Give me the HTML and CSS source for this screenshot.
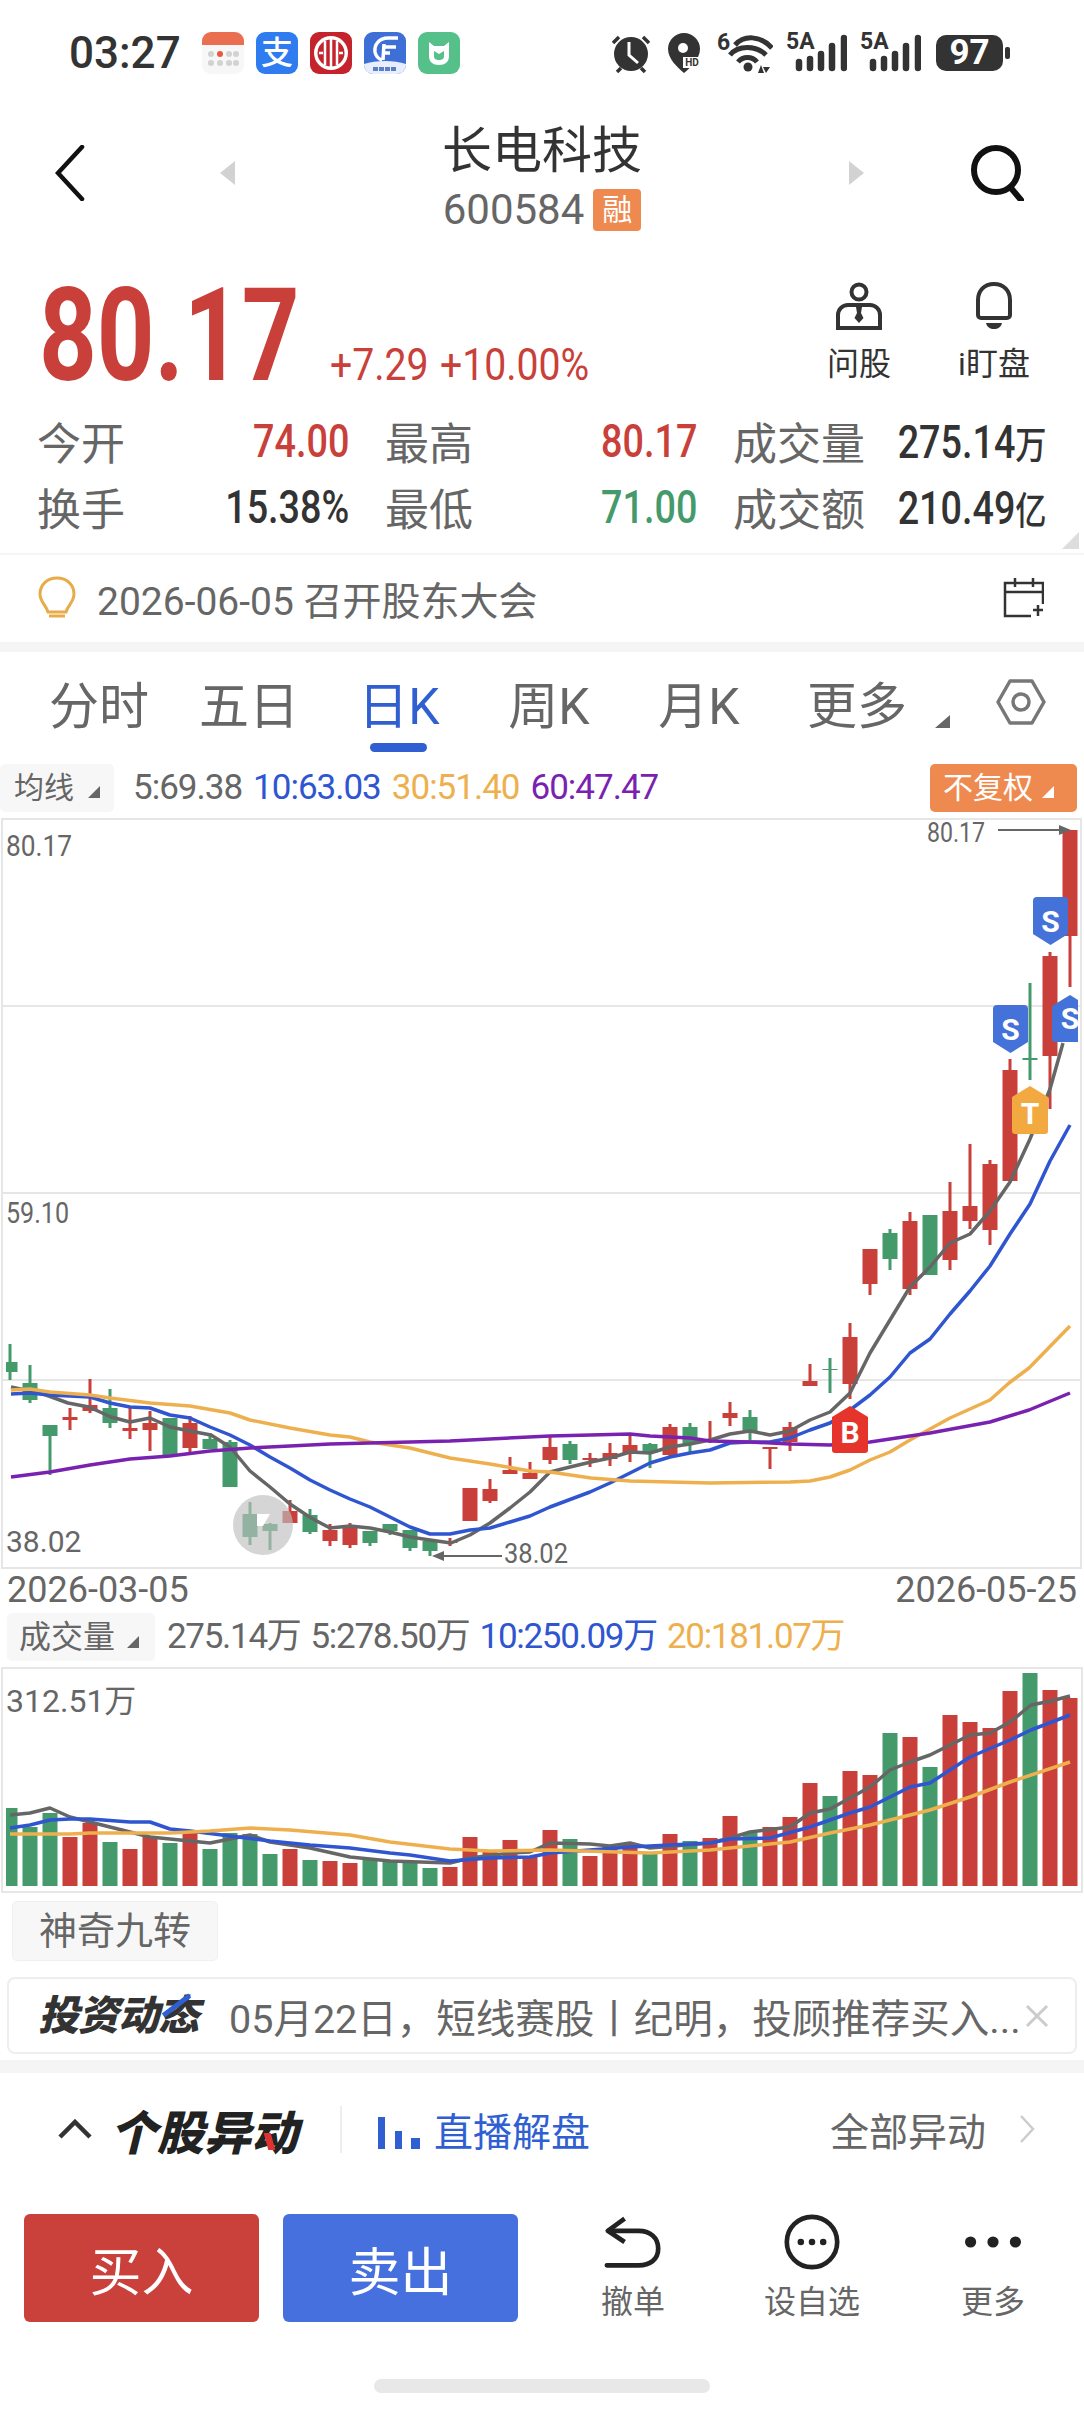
FILE: index.html
```html
<!DOCTYPE html>
<html lang="zh-CN">
<head>
    <meta charset="UTF-8">
    <meta name="viewport" content="width=device-width, initial-scale=1.0">
    <title>长电科技 600584</title>
    <link rel="stylesheet" href="styles.css">
</head>
<body>
    <div class="status-bar">
        <span class="clock">03:27</span>
        <div class="app-icons">
            <svg class="app" viewBox="0 0 42 42"><rect width="42" height="42" rx="9" fill="#f7f7f7"/><path d="M0 13V9a9 9 0 0 1 9-9h24a9 9 0 0 1 9 9v4z" fill="#e96f50"/><g fill="#d2d2d2"><circle cx="9" cy="22" r="3"/><circle cx="27" cy="22" r="3"/><circle cx="34" cy="22" r="3"/><circle cx="9" cy="31" r="3"/><circle cx="18" cy="31" r="3"/><circle cx="27" cy="31" r="3"/><circle cx="34" cy="31" r="3"/></g><circle cx="18" cy="22" r="3" fill="#e9573f"/></svg>
            <span class="app app-alipay">支</span>
            <svg class="app" viewBox="0 0 42 42"><rect width="42" height="42" rx="9" fill="#c4232b"/><circle cx="21" cy="21" r="17" fill="#fff"/><circle cx="21" cy="21" r="13.500" fill="#c4232b"/><path d="M21 7v28M15 9v24M27 9v24M9 21h4M29 21h4" stroke="#fff" stroke-width="2.500" fill="none"/></svg>
            <svg class="app" viewBox="0 0 42 42"><rect width="42" height="42" rx="9" fill="#3d6fd6"/><path d="M0 32c12-4 30-4 42 0v1a9 9 0 0 1-9 9H9a9 9 0 0 1-9-9z" fill="#e8eefb"/><path d="M34 6H24C15 6 10 13 11 20c1 5 4 7 7 8M20 15h12M18 21h8M20 12l-1 16" fill="none" stroke="#fff" stroke-width="3.500"/><path d="M9 37h24" stroke="#5a7fc8" stroke-width="4" stroke-dasharray="5 1"/></svg>
            <svg class="app" viewBox="0 0 42 42"><rect width="42" height="42" rx="9" fill="#55c08a"/><path d="M11 10l5 4h10l5-4v14c0 6-4 9-10 9s-10-3-10-9z" fill="#fff"/><path d="M16 19v5c0 3 2 4 5 4s5-1 5-4v-5l-5 3z" fill="#55c08a"/></svg>
        </div>
        <div class="sys-icons">
            <svg class="ico-alarm" viewBox="0 0 38 40"><path d="M1 10l6-6M37 10l-6-6M5 39l4-4M33 39l-4-4" stroke="#333" stroke-width="3.500"/><circle cx="19" cy="21" r="17" fill="#333"/><path d="M17 9v13l9 8" stroke="#fff" stroke-width="3" fill="none"/></svg>
            <div class="ico-pin">
                <svg viewBox="0 0 32 40"><path d="M16 0a16 16 0 0 1 16 16c0 10-10 19-16 24C10 35 0 26 0 16A16 16 0 0 1 16 0z" fill="#333"/><circle cx="15" cy="15" r="5" fill="#fff"/></svg>
                <span class="pin-hd">HD</span>
            </div>
            <div class="ico-wifi">
                <svg viewBox="0 0 55 40"><path d="M17 12C26 2 42 2 54 15M12 22C20 12 38 12 48 22M20 29c5-6 14-6 19 0" fill="none" stroke="#333" stroke-width="5"/><circle cx="30" cy="34" r="4.500" fill="#333"/><path d="M43 32l3 8h-6zM48 40l-3-6h7z" fill="#333"/></svg>
                <span class="wifi-num">6</span>
            </div>
            <div class="ico-signal">
                <span class="sig-text">5A</span>
                <svg viewBox="0 0 61 38"><path d="M13 28v6M24 25v9M35 20v14M46 12v22M58 4v30" fill="none" stroke="#333" stroke-width="6.500" stroke-linecap="round"/></svg>
            </div>
            <div class="ico-signal">
                <span class="sig-text">5A</span>
                <svg viewBox="0 0 61 38"><path d="M13 28v6M24 25v9M35 20v14M46 12v22M58 4v30" fill="none" stroke="#333" stroke-width="6.500" stroke-linecap="round"/></svg>
            </div>
            <div class="battery"><span class="battery-body">97</span><span class="battery-nub"></span></div>
        </div>
    </div>

    <div class="nav">
        <div class="nav-left">
            <svg class="ico-back" viewBox="0 0 30 56"><path d="M27 2L3 28l24 26" fill="none" stroke="#111" stroke-width="4.500" stroke-linecap="round"/></svg>
        </div>
        <div class="nav-center">
            <span class="tri-left"></span>
            <div class="nav-title">
                <div class="stock-name">长电科技</div>
                <div class="stock-code">600584<span class="tag-rong">融</span></div>
            </div>
            <span class="tri-right"></span>
        </div>
        <div class="nav-right">
            <svg class="ico-search" viewBox="0 0 54 56"><circle cx="26" cy="25" r="22" fill="none" stroke="#111" stroke-width="6"/><path d="M41 43l10 12" stroke="#111" stroke-width="6" stroke-linecap="round"/></svg>
        </div>
    </div>

    <div class="quote">
        <div class="quote-price">
            <span class="price-box"><span class="price">80.17</span></span>
            <span class="change-box"><span class="change">+7.29</span></span>
            <span class="change-box"><span class="change">+10.00%</span></span>
        </div>
        <div class="quote-tools">
            <div class="quote-tool">
                <svg class="ico-ask" viewBox="0 0 46 48"><circle cx="23" cy="10" r="7.500" fill="none" stroke="#333" stroke-width="4"/><path d="M16 23h-4A10 10 0 0 0 2 33v13h42V33a10 10 0 0 0-10-10h-4" fill="none" stroke="#333" stroke-width="4"/><path d="M15 23h16" stroke="#333" stroke-width="4"/><path d="M20 25h6l-1 6 2.500 5-4.500 5-4.500-5 2.500-5z" fill="#333"/></svg>
                <span>问股</span>
            </div>
            <div class="quote-tool">
                <svg class="ico-bell" viewBox="0 0 38 48"><path d="M19 2C9 2 3 9 3 18v15a3 3 0 0 0 3 3h26a3 3 0 0 0 3-3V18C35 9 29 2 19 2z" fill="none" stroke="#333" stroke-width="4"/><path d="M11 41h16c-1 4-4 6-8 6s-7-2-8-6z" fill="#333"/></svg>
                <span>i盯盘</span>
            </div>
        </div>
    </div>

    <div class="stats">
        <div class="stat"><span>今开</span><b class="red">74.00</b></div>
        <div class="stat"><span>最高</span><b class="red">80.17</b></div>
        <div class="stat"><span>成交量</span><b>275.14<small>万</small></b></div>
        <div class="stat"><span>换手</span><b>15.38%</b></div>
        <div class="stat"><span>最低</span><b class="green">71.00</b></div>
        <div class="stat"><span>成交额</span><b>210.49<small>亿</small></b></div>
        <span class="corner"></span>
    </div>

    <div class="notice">
        <svg class="ico-bulb" viewBox="0 0 38 44"><path d="M19 2C9 2 2 9 2 18c0 8 6 11 8 18h18c2-7 8-10 8-18 0-9-7-16-17-16z" fill="none" stroke="#e7ab48" stroke-width="3"/><path d="M11 40h16" stroke="#e7ab48" stroke-width="3"/></svg>
        <span class="notice-text">2026-06-05 召开股东大会</span>
        <svg class="ico-cal" viewBox="0 0 41 41"><path d="M40 27V6H2v33h26M2 15h38M12 1v9M30 1v9M30 33h10M35 28v11" fill="none" stroke="#333" stroke-width="2.500"/></svg>
    </div>

    <div class="band"></div>

    <div class="tabs">
        <div class="tab-list">
            <span class="tab">分时</span>
            <span class="tab">五日</span>
            <span class="tab active">日K</span>
            <span class="tab">周K</span>
            <span class="tab">月K</span>
            <span class="tab tab-more">更多<i class="tri-corner"></i></span>
        </div>
        <svg class="ico-hex" viewBox="0 0 50 46"><path d="M14 2h22l12 21-12 21H14L2 23z" fill="none" stroke="#777" stroke-width="3.500" stroke-linejoin="round"/><circle cx="25" cy="23" r="8" fill="none" stroke="#777" stroke-width="3.500"/></svg>
    </div>

    <div class="ma-row">
        <span class="chip">均线<i class="tri-corner"></i></span>
        <div class="ma-values">
            <span class="gray">5:69.38</span>
            <span class="blue">10:63.03</span>
            <span class="orange">30:51.40</span>
            <span class="purple">60:47.47</span>
        </div>
        <span class="chip chip-orange">不复权<i class="tri-corner"></i></span>
    </div>

    <svg class="kline" viewBox="0 814 1084 756">
        <defs><clipPath id="clip-right"><rect x="0" y="814" width="1078" height="756"/></clipPath></defs>
        <rect class="frame" x="2" y="819" width="1079" height="749"/>
        <path class="frame" d="M2 1006H1081M2 1193H1081M2 1380H1081"/>
        <text class="axis" x="6" y="856" textLength="66" lengthAdjust="spacingAndGlyphs">80.17</text>
        <text class="axis" x="6" y="1223" textLength="63" lengthAdjust="spacingAndGlyphs">59.10</text>
        <text class="axis" x="6" y="1552">38.02</text>
        <g id="candles"></g>
        <g id="price-lines"></g>
        <text class="axis axis-small" x="927" y="842" textLength="58" lengthAdjust="spacingAndGlyphs">80.17</text>
        <path class="pointer" d="M998 830H1062"/>
        <path class="pointer-head" d="M1071 830l-12-5v10z"/>
        <path class="pointer" d="M442 1556H502"/>
        <path class="pointer-head" d="M432 1556l12-5v10z"/>
        <text class="axis axis-small" x="504" y="1563" textLength="64" lengthAdjust="spacingAndGlyphs">38.02</text>
        <circle class="watermark" cx="263" cy="1525" r="30"/>
        <path d="M257 1514h13l-7 12h-6z" fill="#fff"/>
        <g class="badge-blue"><path d="M993 1009a4 4 0 0 1 4-4h27a4 4 0 0 1 4 4v33l-17.500 11-17.500-11z"/><text x="1010.500" y="1040">S</text></g>
        <g class="badge-blue"><path d="M1033 901a4 4 0 0 1 4-4h27a4 4 0 0 1 4 4v33l-17.500 11-17.500-11z"/><text x="1050.500" y="932">S</text></g>
        <g class="badge-blue" clip-path="url(#clip-right)"><path d="M1052 1006l18-11 18 11v33a3 3 0 0 1-3 3h-30a3 3 0 0 1-3-3z"/><text x="1070" y="1029">S</text></g>
        <g class="badge-orange"><path d="M1012 1097l18-11 18 11v34a3 3 0 0 1-3 3h-30a3 3 0 0 1-3-3z"/><text x="1030" y="1124">T</text></g>
        <g class="badge-red"><path d="M832 1417l18-11 18 11v33a3 3 0 0 1-3 3h-30a3 3 0 0 1-3-3z"/><text x="850" y="1443">B</text></g>
    </svg>

    <div class="dates"><span>2026-03-05</span><span>2026-05-25</span></div>

    <div class="vol-row">
        <span class="chip chip-vol">成交量<i class="tri-corner"></i></span>
        <div class="ma-values">
            <span class="gray">275.14万</span>
            <span class="gray">5:278.50万</span>
            <span class="blue">10:250.09万</span>
            <span class="orange">20:181.07万</span>
        </div>
    </div>

    <svg class="volume" viewBox="0 1666 1084 228">
        <rect class="frame" x="2" y="1668" width="1080" height="224"/>
        <g id="vol-bars"></g>
        <g id="vol-lines"></g>
        <text class="axis axis-vol" x="6" y="1712">312.51万</text>
    </svg>

    <div class="chip-row"><span class="chip chip-magic">神奇九转</span></div>

    <div class="news">
        <span class="news-logo">投资动态</span>
        <span class="news-text">05月22日，短线赛股丨纪明，投顾推荐买入...</span>
        <svg class="ico-x" viewBox="0 0 24 24"><path d="M2 2l20 20M22 2L2 22" stroke="#ccc" stroke-width="3"/></svg>
    </div>

    <div class="band band-lower"></div>

    <div class="moves">
        <svg class="ico-up" viewBox="0 0 34 20"><path d="M2 18L17 3l15 15" fill="none" stroke="#333" stroke-width="4.500"/></svg>
        <span class="moves-title">个股异动</span>
        <span class="moves-sep"></span>
        <svg class="ico-bars" viewBox="0 0 42 32"><path d="M0 0h7v32H0zM17 14h7v18h-7zM33 21h9v11h-9z" fill="#2f5fd0"/></svg>
        <span class="moves-live">直播解盘</span>
        <span class="moves-all">全部异动</span>
        <svg class="ico-next" viewBox="0 0 16 28"><path d="M2 1l12 13L2 27" fill="none" stroke="#ccc" stroke-width="2.500"/></svg>
    </div>

    <div class="trade">
        <button class="btn btn-buy">买入</button>
        <button class="btn btn-sell">卖出</button>
        <div class="tool tool-undo">
            <svg class="tool-ico" viewBox="0 0 60 60"><g transform="translate(0 3)"><path d="M21 2L3 15l18 12" fill="none" stroke="#222" stroke-width="5" stroke-linejoin="round"/><path d="M4 15h32c12 0 21 7 21 19s-9 18-21 18H2" fill="none" stroke="#222" stroke-width="5" stroke-linecap="round"/></g></svg>
            <span>撤单</span>
        </div>
        <div class="tool tool-watch">
            <svg class="tool-ico" viewBox="0 0 60 60"><circle cx="30" cy="30" r="27" fill="none" stroke="#222" stroke-width="5"/><circle cx="18" cy="30" r="3.500" fill="#222"/><circle cx="30" cy="30" r="3.500" fill="#222"/><circle cx="42" cy="30" r="3.500" fill="#222"/></svg>
            <span>设自选</span>
        </div>
        <div class="tool tool-more">
            <svg class="tool-ico" viewBox="0 0 60 60"><circle cx="6" cy="30" r="6" fill="#222"/><circle cx="30" cy="30" r="6" fill="#222"/><circle cx="54" cy="30" r="6" fill="#222"/></svg>
            <span>更多</span>
        </div>
    </div>

    <div class="home-bar"></div>

    <script src="chart.js"></script>
</body>
</html>
```
FILE: styles.css
```css
* {
    box-sizing: border-box;
}
body {
    width: 1084px;
    height: 2412px;
    margin: 0;
    overflow: hidden;
    background: #fff;
    font-family: Roboto, "Noto Sans CJK SC", sans-serif;
    color: #333;
}
.red { color: #c9403a; }
.green { color: #459a6c; }
.gray { color: #666; }
.blue { color: #2f55d0; }
.orange { color: #eeb04e; }
.purple { color: #7a22b0; }

/* status bar */
.status-bar {
    height: 106px;
    display: flex;
    align-items: center;
    padding-left: 69px;
}
.clock {
    width: 133px;
    font-size: 44px;
    font-weight: 500;
}
.app-icons {
    display: flex;
    gap: 12px;
}
.app {
    display: block;
    width: 42px;
    height: 42px;
}
.app-alipay {
    border-radius: 9px;
    background: #2f7cf0;
    color: #fff;
    font-size: 32px;
    font-weight: 500;
    line-height: 42px;
    text-align: center;
}
.sys-icons {
    display: flex;
    align-items: center;
    margin-left: 152px;
}
.sys-icons svg {
    display: block;
}
.ico-alarm { width: 38px; height: 40px; }
.ico-pin {
    position: relative;
    width: 32px;
    height: 40px;
    margin-left: 18px;
}
.pin-hd {
    position: absolute;
    left: 15px;
    top: 24px;
    width: 18px;
    height: 11px;
    background: #fff;
    font-size: 10px;
    font-weight: 700;
    line-height: 11px;
    text-align: center;
}
.ico-wifi {
    position: relative;
    width: 55px;
    height: 40px;
    margin-left: 18px;
}
.wifi-num {
    position: absolute;
    left: -1px;
    top: -2px;
    font-size: 23px;
    font-weight: 700;
    line-height: 24px;
}
.ico-signal {
    position: relative;
    width: 61px;
    height: 38px;
    margin-left: 13px;
}
.sig-text {
    position: absolute;
    left: 0;
    top: -4px;
    font-size: 23px;
    font-weight: 700;
    line-height: 24px;
}
.battery {
    display: flex;
    align-items: center;
    margin-left: 15px;
}
.battery-body {
    width: 67px;
    height: 36px;
    border-radius: 10px;
    background: #333;
    color: #fff;
    font-size: 35px;
    font-weight: 700;
    line-height: 36px;
    text-align: center;
}
.battery-nub {
    width: 5px;
    height: 12px;
    margin-left: 2px;
    border-radius: 2px;
    background: #333;
}

/* stock header */
.nav {
    height: 134px;
    display: grid;
    grid-template-columns: 220px 1fr 220px;
    align-items: center;
}
.nav-left { padding-left: 55px; }
.nav-right { padding-right: 60px; text-align: right; }
.ico-back { display: block; width: 30px; height: 56px; }
.ico-search { display: inline-block; width: 54px; height: 56px; vertical-align: top; }
.nav-center {
    display: flex;
    align-items: center;
    justify-content: space-between;
    height: 134px;
}
.tri-left, .tri-right {
    width: 0;
    height: 0;
    border-top: 12px solid transparent;
    border-bottom: 12px solid transparent;
}
.tri-left { border-right: 15px solid #d2d2d2; }
.tri-right { border-left: 15px solid #d2d2d2; }
.nav-title {
    align-self: flex-start;
    text-align: center;
}
.stock-name {
    margin-top: 10px;
    font-size: 50px;
    line-height: 70px;
}
.stock-code {
    display: flex;
    align-items: center;
    justify-content: center;
    margin-top: 2px;
    color: #666;
    font-size: 42px;
    line-height: 44px;
}
.tag-rong {
    width: 48px;
    height: 42px;
    margin-left: 9px;
    border-radius: 4px;
    background: #ee8a4f;
    color: #fff;
    font-size: 30px;
    line-height: 42px;
    text-align: center;
}

/* price block, the figures in the app are narrower than Roboto */
.quote {
    height: 160px;
    display: flex;
    align-items: flex-end;
    padding: 0 50px 4px 39px;
    color: #c9403a;
}
.quote-price {
    display: flex;
    align-items: baseline;
}
.price-box { width: 291px; }
.price {
    display: inline-block;
    font-size: 130px;
    font-weight: 700;
    line-height: 120px;
    transform: scaleX(0.775);
    transform-origin: left center;
}
.change-box { width: 110px; }
.change {
    display: inline-block;
    font-size: 45px;
    transform: scaleX(0.87);
    transform-origin: left center;
    white-space: nowrap;
}
.quote-tools {
    display: flex;
    gap: 55px;
    align-self: flex-start;
    margin: 42px 0 0 auto;
    color: #333;
}
.quote-tool {
    display: flex;
    flex-direction: column;
    align-items: center;
    width: 80px;
    font-size: 32px;
    line-height: 40px;
}
.ico-ask, .ico-bell { height: 48px; margin-bottom: 14px; }
.ico-ask { width: 46px; }
.ico-bell { width: 38px; }

/* stats */
.stats {
    position: relative;
    height: 155px;
    display: grid;
    grid-template-columns: repeat(3, 312px);
    grid-auto-rows: 66px;
    column-gap: 36px;
    padding: 8px 0 0 37px;
    border-bottom: 2px solid #f5f5f5;
}
.stat {
    display: flex;
    align-items: center;
    justify-content: space-between;
    color: #666;
    font-size: 44px;
    white-space: nowrap;
}
.stat b {
    display: inline-block;
    color: #333;
    font-size: 46px;
    font-weight: 500;
    transform: scaleX(0.82);
    transform-origin: right center;
}
.stat b.red { color: #c9403a; }
.stat b.green { color: #459a6c; }
.stat small { font-size: 38px; }
.corner {
    position: absolute;
    right: 5px;
    bottom: 4px;
    width: 0;
    height: 0;
    border-left: 17px solid transparent;
    border-bottom: 17px solid #ddd;
}

/* notice */
.notice {
    height: 87px;
    display: flex;
    align-items: center;
    padding: 0 40px 2px 38px;
}
.ico-bulb { width: 38px; height: 44px; }
.notice-text {
    margin-left: 21px;
    color: #666;
    font-size: 39px;
}
.ico-cal { width: 41px; height: 41px; margin-left: auto; }

.band {
    height: 10px;
    background: #f5f5f5;
}

/* period tabs */
.tabs {
    height: 108px;
    display: flex;
    align-items: center;
    padding: 0 38px 8px 24px;
}
.tab-list {
    display: grid;
    grid-template-columns: repeat(6, 150px);
}
.tab {
    position: relative;
    color: #666;
    font-size: 50px;
    text-align: center;
}
.tab.active { color: #2f5fd0; }
.tab.active::after {
    content: "";
    position: absolute;
    left: 46px;
    bottom: -14px;
    width: 57px;
    height: 9px;
    border-radius: 5px;
    background: #2f5fd0;
}
.tab-more { left: 8px; }
.tri-corner {
    display: inline-block;
    width: 0;
    height: 0;
    margin-left: 14px;
    border-left: 13px solid transparent;
    border-bottom: 13px solid #666;
}
.tab-more .tri-corner {
    position: absolute;
    left: 139px;
    bottom: 10px;
    border-left-width: 15px;
    border-bottom-width: 13px;
}
.ico-hex { width: 50px; height: 46px; margin-left: auto; }

/* indicator rows */
.ma-row {
    height: 54px;
    display: flex;
    align-items: flex-start;
    padding-top: 4px;
}
.chip {
    height: 48px;
    padding: 0 14px;
    border-radius: 5px;
    background: #f7f7f7;
    color: #666;
    font-size: 30px;
    line-height: 48px;
    white-space: nowrap;
}
.chip .tri-corner {
    border-left-width: 12px;
    border-bottom-width: 12px;
}
.ma-values {
    display: flex;
    gap: 11px;
    margin-left: 19px;
    font-size: 35px;
    letter-spacing: -1px;
    line-height: 48px;
    white-space: nowrap;
}
.chip-orange {
    width: 147px;
    margin-left: auto;
    margin-right: 7px;
    padding: 0 0 0 13px;
    background: #ee8a4f;
    color: #fff;
}
.chip-orange .tri-corner { border-bottom-color: #fff; margin-left: 9px; }

/* charts */
.kline, .volume {
    display: block;
    width: 1084px;
}
.kline { height: 756px; }
.volume { height: 228px; margin-top: 5px; }
.frame {
    fill: none;
    stroke: #e6e6e6;
    stroke-width: 2;
}
.axis {
    fill: #666;
    font-size: 30px;
}
.axis-small { font-size: 27px; }
.axis-vol { font-size: 32px; }
.pointer {
    stroke: #666;
    stroke-width: 2;
}
.pointer-head { fill: #666; }
.watermark { fill: rgba(190, 190, 190, 0.65); }
.badge-blue path { fill: #4472d9; }
.badge-orange path { fill: #f2a93f; }
.badge-red path { fill: #e5342b; }
.kline g text {
    fill: #fff;
    font-size: 30px;
    font-weight: 700;
    text-anchor: middle;
}
.dates {
    height: 43px;
    display: flex;
    justify-content: space-between;
    padding: 0 7px;
    color: #666;
    font-size: 36px;
    line-height: 40px;
}
.vol-row {
    display: flex;
    height: 48px;
    padding-left: 7px;
}
.chip-vol { width: 148px; padding: 0 0 0 12px; font-size: 32px; }
.chip-vol .tri-corner { margin-left: 12px; }
.vol-row .ma-values { margin-left: 12px; gap: 10px; letter-spacing: -1.3px; }
.chip-row {
    height: 76px;
    padding: 7px 0 0 12px;
}
.chip-magic {
    display: inline-block;
    width: 206px;
    height: 60px;
    padding: 0;
    border: 1px solid #f0f0f0;
    font-size: 38px;
    line-height: 58px;
    text-align: center;
}

/* news strip */
.news {
    height: 77px;
    display: flex;
    align-items: center;
    margin: 7px 7px 0;
    padding: 0 26px 0 29px;
    border: 2px solid #eee;
    border-radius: 8px;
}
.news-logo {
    position: relative;
    width: 191px;
    flex: none;
    font-size: 41px;
    font-weight: 900;
    font-style: italic;
    letter-spacing: -1px;
    line-height: 50px;
}
.news-logo::after {
    content: "";
    position: absolute;
    left: 122px;
    top: 12px;
    width: 33px;
    height: 5px;
    background: #2f5fd0;
    transform: rotate(-37deg);
}
.news-text {
    color: #666;
    font-size: 39.500px;
    white-space: nowrap;
}
.ico-x { width: 24px; height: 24px; margin-left: auto; flex: none; }
.band-lower {
    height: 13px;
    margin-top: 6px;
}

/* unusual moves row */
.moves {
    height: 141px;
    display: flex;
    align-items: center;
    padding: 0 49px 29px 58px;
}
.ico-up { width: 34px; height: 20px; }
.moves-title {
    position: relative;
    width: 190px;
    margin-left: 18px;
    font-size: 47px;
    font-weight: 900;
    font-style: italic;
    color: #222;
    white-space: nowrap;
}
.moves-title::after {
    content: "";
    position: absolute;
    right: 27px;
    bottom: 14px;
    width: 7px;
    height: 17px;
    background: #d33;
    transform: skewX(15deg);
}
.moves-sep {
    width: 2px;
    height: 47px;
    margin-left: 40px;
    background: #eee;
}
.ico-bars { width: 42px; height: 32px; margin-left: 36px; margin-top: 8px; }
.moves-live {
    margin-left: 14px;
    color: #2f5fd0;
    font-size: 39px;
}
.moves-all {
    margin-left: auto;
    color: #666;
    font-size: 39px;
}
.ico-next { width: 16px; height: 28px; margin-left: 33px; }

/* trade bar */
.trade {
    height: 108px;
    display: flex;
    padding-left: 24px;
}
.btn {
    width: 235px;
    height: 108px;
    border: none;
    border-radius: 6px;
    color: #fff;
    font-family: inherit;
    font-size: 52px;
}
.btn-buy { background: #ca403b; }
.btn-sell { background: #4570dd; margin-left: 24px; }
.tool {
    display: flex;
    flex-direction: column;
    align-items: center;
    width: 100px;
    color: #666;
    font-size: 32px;
    line-height: 40px;
}
.tool-ico { height: 60px; width: 60px; margin-bottom: 12px; }
.tool-undo { margin-left: 65px; }
.tool-watch { margin-left: 79px; }
.tool-more { margin-left: 81px; }
.home-bar {
    width: 336px;
    height: 14px;
    margin: 57px auto 0;
    border-radius: 7px;
    background: #e8e8e8;
}
```
FILE: chart.js
```javascript
// Page y coordinates are used directly, the svg viewBoxes start at the page offset
const UP = '#c9403a';
const DOWN = '#459a6c';

// [wickTop, wickBottom, bodyTop, bodyBottom, up?]
const candles = [
    [1344, 1380, 1362, 1372, 0], [1365, 1403, 1383, 1400, 0], [1425, 1475, 1425, 1436, 0],
    [1408, 1430, 1417, 1420, 1], [1379, 1413, 1405, 1411, 1], [1389, 1428, 1408, 1423, 0],
    [1407, 1439, 1428, 1431, 1], [1411, 1451, 1423, 1430, 1], [1418, 1455, 1418, 1455, 0],
    [1416, 1454, 1423, 1448, 1], [1433, 1449, 1439, 1449, 0], [1440, 1487, 1442, 1487, 0],
    [1502, 1545, 1514, 1537, 0], [1523, 1550, 1524, 1531, 0], [1500, 1523, 1511, 1523, 1],
    [1509, 1534, 1515, 1532, 0], [1524, 1546, 1530, 1541, 1], [1523, 1548, 1526, 1545, 1],
    [1531, 1546, 1531, 1543, 0], [1524, 1535, 1524, 1531, 0], [1530, 1551, 1530, 1548, 0],
    [1541, 1556, 1541, 1551, 0], [1538, 1546, 1542, 1543, 1], [1488, 1521, 1488, 1521, 1],
    [1479, 1503, 1489, 1501, 1], [1457, 1474, 1470, 1474, 1], [1462, 1479, 1473, 1479, 1],
    [1435, 1464, 1447, 1460, 1], [1441, 1464, 1444, 1460, 0], [1453, 1467, 1458, 1460, 1],
    [1443, 1466, 1453, 1459, 1], [1436, 1462, 1445, 1453, 1], [1443, 1468, 1444, 1453, 0],
    [1424, 1456, 1427, 1455, 1], [1423, 1452, 1427, 1444, 0], [1421, 1443, 1439, 1442, 1],
    [1402, 1426, 1413, 1418, 1], [1410, 1440, 1417, 1432, 0], [1447, 1469, 1447, 1449, 1],
    [1422, 1451, 1427, 1442, 1], [1364, 1386, 1381, 1386, 1], [1358, 1393, 1369, 1370, 0],
    [1323, 1399, 1337, 1384, 1], [1249, 1295, 1249, 1284, 1], [1229, 1270, 1233, 1259, 0],
    [1212, 1295, 1221, 1289, 1], [1215, 1275, 1215, 1275, 0], [1182, 1270, 1211, 1260, 1],
    [1144, 1229, 1206, 1221, 1], [1160, 1245, 1164, 1230, 1], [1059, 1181, 1070, 1181, 1],
    [983, 1080, 1058, 1060, 0], [952, 1109, 956, 1056, 1], [830, 987, 830, 936, 1]
];

// [top, up?]
const volumes = [
    [1808, 0], [1827, 0], [1813, 0], [1837, 1], [1823, 1], [1842, 0], [1849, 1], [1837, 1], [1843, 0],
    [1833, 1], [1849, 0], [1833, 0], [1834, 0], [1854, 0], [1849, 1], [1860, 0], [1861, 1], [1863, 1],
    [1858, 0], [1862, 0], [1863, 0], [1868, 0], [1867, 1], [1837, 1], [1852, 1], [1840, 1], [1857, 1],
    [1830, 1], [1839, 0], [1856, 1], [1847, 1], [1845, 1], [1853, 0], [1834, 1], [1841, 0], [1838, 1],
    [1816, 1], [1833, 0], [1827, 1], [1817, 1], [1783, 1], [1796, 0], [1771, 1], [1775, 1], [1733, 0],
    [1737, 1], [1767, 0], [1715, 1], [1722, 1], [1728, 1], [1691, 1], [1673, 0], [1690, 1], [1698, 1]
];

const priceLines = [
    ['#666', '11,1387 30,1391 46,1395 68,1403 89,1407 111,1417 130,1422 150,1418 170,1427 190,1431 211,1435 230,1447 250,1471 270,1487 290,1504 311,1518 330,1528 350,1526 370,1528 390,1532 410,1537 430,1540 451,1543 470,1535 490,1523 510,1508 530,1492 550,1472 570,1467 591,1462 610,1458 630,1452 650,1453 670,1447 690,1444 710,1440 730,1434 750,1431 770,1435 790,1431 810,1420 830,1412 850,1393 870,1353 890,1320 910,1287 930,1267 950,1243 970,1234 990,1211 1010,1182 1030,1139 1050,1089 1063,1043'],
    ['#2f55d0', '11,1394 30,1393 50,1395 70,1396 90,1397 110,1403 130,1407 150,1408 170,1415 190,1418 210,1427 230,1435 250,1445 270,1457 290,1468 310,1480 330,1490 350,1499 370,1507 390,1517 410,1527 430,1534 450,1534 470,1530 490,1528 510,1522 530,1516 550,1507 590,1492 610,1483 630,1473 650,1463 670,1457 690,1453 710,1450 730,1443 750,1442 770,1442 790,1438 810,1430 830,1423 850,1410 870,1395 890,1377 910,1353 930,1339 950,1314 970,1291 990,1266 1010,1234 1030,1204 1050,1161 1070,1125'],
    ['#eeb04e', '11,1390 30,1389 50,1392 90,1395 110,1398 150,1403 190,1406 230,1413 250,1420 290,1428 330,1435 350,1437 370,1442 410,1448 450,1458 490,1464 530,1471 550,1472 591,1478 630,1481 710,1483 790,1482 810,1481 830,1477 850,1470 870,1460 890,1452 910,1440 950,1418 990,1400 1009,1383 1029,1368 1070,1326'],
    ['#7a22b0', '11,1477 50,1472 90,1465 130,1459 170,1456 210,1451 250,1448 290,1446 330,1444 370,1443 450,1441 550,1436 591,1435 630,1434 650,1436 690,1438 710,1441 750,1442 790,1444 830,1445 870,1442 890,1439 930,1433 990,1422 1029,1410 1070,1393']
];

const volLines = [
    ['#666', '10,1815 30,1813 50,1808 70,1817 90,1822 110,1827 150,1837 190,1841 210,1843 250,1835 270,1842 310,1848 350,1857 390,1861 450,1863 470,1858 510,1853 530,1852 550,1843 590,1844 610,1846 630,1843 650,1848 710,1843 730,1838 750,1832 790,1827 810,1813 830,1809 870,1787 890,1770 910,1762 930,1755 970,1735 990,1733 1010,1722 1031,1705 1051,1701 1070,1696'],
    ['#2f55d0', '10,1828 30,1825 50,1820 70,1819 90,1819 130,1822 150,1822 170,1829 190,1831 230,1836 270,1841 310,1845 350,1848 390,1853 410,1855 450,1861 490,1858 530,1857 550,1853 590,1850 630,1847 710,1843 730,1839 770,1838 810,1827 850,1813 870,1807 910,1787 930,1783 970,1757 1010,1740 1031,1730 1070,1715'],
    ['#eeb04e', '10,1834 70,1834 90,1833 170,1833 210,1831 250,1828 290,1830 350,1835 390,1842 450,1849 490,1851 550,1850 650,1853 710,1850 790,1842 830,1833 870,1825 930,1810 970,1797 1010,1782 1070,1762']
];

const SVG_NS = 'http://www.w3.org/2000/svg';

function addRect(parent, x, y, w, h, color) {
    const rect = document.createElementNS(SVG_NS, 'rect');
    rect.setAttribute('x', x);
    rect.setAttribute('y', y);
    rect.setAttribute('width', w);
    rect.setAttribute('height', h);
    rect.setAttribute('fill', color);
    parent.appendChild(rect);
}

function addLines(parent, lines) {
    lines.forEach(([color, points]) => {
        const line = document.createElementNS(SVG_NS, 'polyline');
        line.setAttribute('points', points);
        line.setAttribute('fill', 'none');
        line.setAttribute('stroke', color);
        line.setAttribute('stroke-width', 3.5);
        line.setAttribute('stroke-linejoin', 'round');
        parent.appendChild(line);
    });
}

const candleGroup = document.getElementById('candles');
candles.forEach(([wickTop, wickBottom, bodyTop, bodyBottom, up], i) => {
    const x = 10 + 20 * i;
    const color = up ? UP : DOWN;
    const left = Math.max(x - 7.5, 6);
    addRect(candleGroup, x - 1.5, wickTop, 3, wickBottom - wickTop, color);
    addRect(candleGroup, left, bodyTop, x + 7.5 - left, bodyBottom - bodyTop, color);
});

const barGroup = document.getElementById('vol-bars');
volumes.forEach(([top, up], i) => {
    const x = 10 + 20 * i;
    const left = Math.max(x - 7.5, 6);
    addRect(barGroup, left, top, x + 7.5 - left, 1886 - top, up ? UP : DOWN);
});

addLines(document.getElementById('price-lines'), priceLines);
addLines(document.getElementById('vol-lines'), volLines);
```
